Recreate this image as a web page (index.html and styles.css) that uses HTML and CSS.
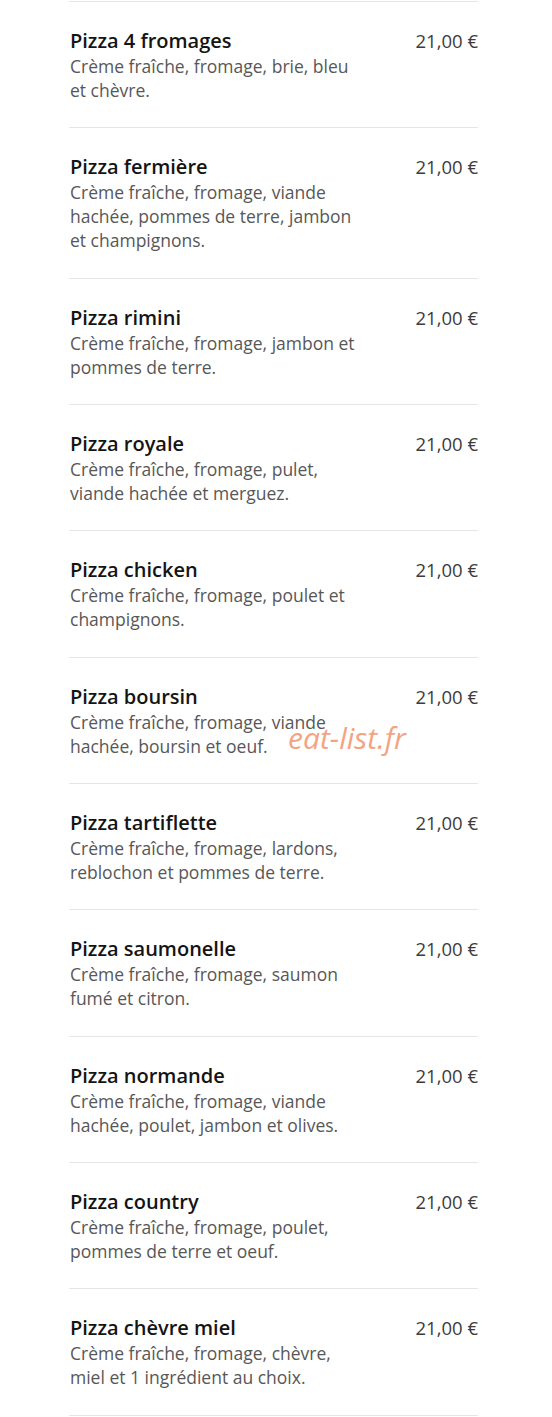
FILE: index.html
```html
<!DOCTYPE html>
<html>

<head>
    <title>Pizzas</title>
    <link rel="stylesheet" href="styles.css">
</head>

<body>
    <div class="menu">
        <div class="item">
            <div class="info">
                <div class="name">Pizza 4 fromages</div>
                <div class="desc">Crème fraîche, fromage, brie, bleu et chèvre.</div>
            </div>
            <div class="price">21,00 €</div>
        </div>
        <div class="item">
            <div class="info">
                <div class="name">Pizza fermière</div>
                <div class="desc">Crème fraîche, fromage, viande hachée, pommes de terre, jambon et champignons.</div>
            </div>
            <div class="price">21,00 €</div>
        </div>
        <div class="item">
            <div class="info">
                <div class="name">Pizza rimini</div>
                <div class="desc">Crème fraîche, fromage, jambon et pommes de terre.</div>
            </div>
            <div class="price">21,00 €</div>
        </div>
        <div class="item">
            <div class="info">
                <div class="name">Pizza royale</div>
                <div class="desc">Crème fraîche, fromage, pulet, viande hachée et merguez.</div>
            </div>
            <div class="price">21,00 €</div>
        </div>
        <div class="item">
            <div class="info">
                <div class="name">Pizza chicken</div>
                <div class="desc">Crème fraîche, fromage, poulet et champignons.</div>
            </div>
            <div class="price">21,00 €</div>
        </div>
        <div class="item">
            <div class="info">
                <div class="name">Pizza boursin</div>
                <div class="desc">Crème fraîche, fromage, viande hachée, boursin et oeuf.</div>
            </div>
            <div class="price">21,00 €</div>
            <span class="watermark">eat-list.fr</span>
        </div>
        <div class="item">
            <div class="info">
                <div class="name">Pizza tartiflette</div>
                <div class="desc">Crème fraîche, fromage, lardons, reblochon et pommes de terre.</div>
            </div>
            <div class="price">21,00 €</div>
        </div>
        <div class="item">
            <div class="info">
                <div class="name">Pizza saumonelle</div>
                <div class="desc">Crème fraîche, fromage, saumon fumé et citron.</div>
            </div>
            <div class="price">21,00 €</div>
        </div>
        <div class="item">
            <div class="info">
                <div class="name">Pizza normande</div>
                <div class="desc">Crème fraîche, fromage, viande hachée, poulet, jambon et olives.</div>
            </div>
            <div class="price">21,00 €</div>
        </div>
        <div class="item">
            <div class="info">
                <div class="name">Pizza country</div>
                <div class="desc">Crème fraîche, fromage, poulet, pommes de terre et oeuf.</div>
            </div>
            <div class="price">21,00 €</div>
        </div>
        <div class="item">
            <div class="info">
                <div class="name">Pizza chèvre miel</div>
                <div class="desc">Crème fraîche, fromage, chèvre, miel et 1 ingrédient au choix.</div>
            </div>
            <div class="price">21,00 €</div>
        </div>
    </div>
</body>

</html>
```

FILE: styles.css
```css
body {
    margin: 0;
    font-family: "Open Sans", Arial, sans-serif;
    background-color: #fff;
}

.menu {
    width: 409px;
    margin: 1px 0 0 69px;
    border-top: 1px solid #e6e6e6;
}

.item {
    position: relative;
    display: flex;
    justify-content: space-between;
    padding: 25px 0 25.33px 1px;
    border-bottom: 1px solid #e6e6e6;
}

.info {
    width: 290px;
}

.name {
    font-size: 20px;
    line-height: 27px;
    font-weight: 600;
    color: #141414;
}

.desc {
    font-size: 17.5px;
    line-height: 24px;
    color: #575757;
}

.price {
    font-size: 18.5px;
    line-height: 27px;
    font-weight: 500;
    color: #3c3c3c;
}

.watermark {
    position: absolute;
    left: 219px;
    top: 59px;
    font-size: 30px;
    font-style: italic;
    color: #f4a383;
}
```
